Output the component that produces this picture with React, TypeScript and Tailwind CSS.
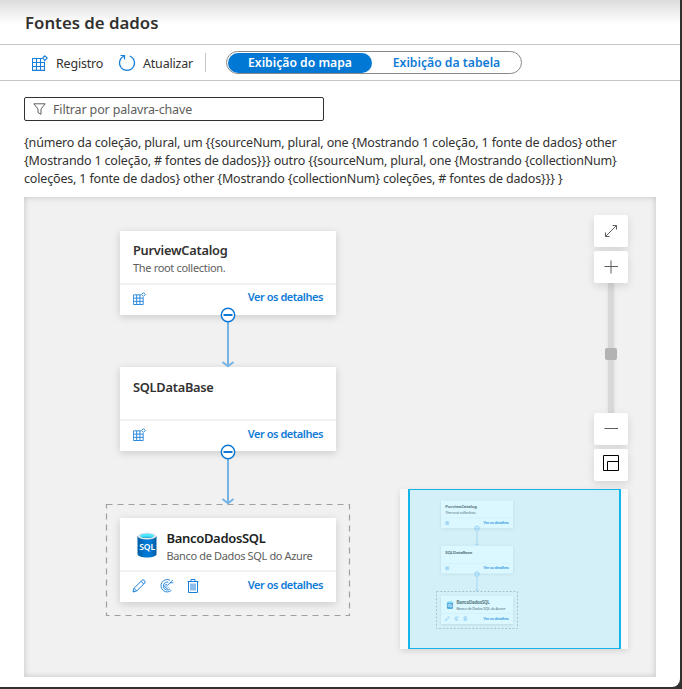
import React from "react";

function GridIcon({ size, className = "" }: { size: number; className?: string }) {
  return (
    <svg width={size} height={size} viewBox="0 0 16 16" fill="none" stroke="#1a7fd9" strokeWidth="1.1" className={`shrink-0 ${className}`}>
      <path d="M10 3.5H.5V15.4H12.5V6.5M.5 7.5H12.5M.5 11.5H12.5M4.5 3.5V15.5M8.5 3.5V15.5" />
      <path d="M12.9 .8L15.2 3.1L12.9 5.4L10.6 3.1Z" />
    </svg>
  );
}

function SqlIcon() {
  return (
    <svg width="20" height="26" viewBox="0 0 20 26">
      <defs>
        <linearGradient id="cyl" x1="0" x2="1">
          <stop offset="0" stopColor="#005ba1" />
          <stop offset=".4" stopColor="#0078d4" />
          <stop offset=".7" stopColor="#0078d4" />
          <stop offset="1" stopColor="#005ba1" />
        </linearGradient>
      </defs>
      <path d="M.5 4V22C.5 24 4.7 25.5 10 25.5S19.500 24 19.500 22V4Z" fill="url(#cyl)" />
      <ellipse cx="10" cy="4" rx="9.500" ry="3.500" fill="#e8e8e8" />
      <ellipse cx="10" cy="3.800" rx="7.300" ry="2.300" fill="#50e6ff" />
      <path d="M4 5.200C6 4.100 14 4.100 16 5.200C14 6.400 6 6.400 4 5.200Z" fill="#198ab3" opacity=".5" />
      <text x="10.200" y="17.600" textAnchor="middle" fill="#fff" fontSize="8.500" fontWeight="600" fontFamily="Noto Sans, sans-serif">SQL</text>
    </svg>
  );
}

function DetailLink() {
  return <span className="text-[11px] font-semibold leading-4 tracking-[-0.45px] text-[#0f7ad6]">Ver os detalhes</span>;
}

function CollectionCard({ title, subtitle }: { title: string; subtitle?: string }) {
  return (
    <div className="flex h-[84px] w-[216px] shrink-0 flex-col bg-white shadow-[0_2px_8px_rgba(0,0,0,0.16)]">
      <div className="h-[52px] pl-[13px] pt-[10.5px]">
        <div className="text-[12.8px] font-semibold leading-[18px] tracking-[-0.25px] text-[#323130]">{title}</div>
        <div className="text-[11px] leading-[17px] tracking-[-0.32px] text-[#605e5c]">{subtitle}</div>
      </div>
      <div className="flex h-8 items-start justify-between border-t-2 border-[#f1f1f1] pl-[13px] pr-[13px] pt-[4.5px]">
        <GridIcon size={13} className="mt-[2.5px]" />
        <DetailLink />
      </div>
    </div>
  );
}

function Connector({ height }: { height: string }) {
  return (
    <div className={`relative w-4 shrink-0 ${height}`}>
      <svg className="absolute -top-[7.5px] left-0 overflow-visible" width="16" height="61" viewBox="0 0 16 61" fill="none">
        <path d="M8 15V59" stroke="#75b3e5" strokeWidth="2" />
        <path d="M2.500 55L8 59.200L13.500 55" stroke="#75b3e5" strokeWidth="2" />
        <circle cx="8" cy="8" r="6.700" fill="#fff" stroke="#0f7ad6" strokeWidth="1.500" />
        <path d="M3.500 8H12.500" stroke="#0f7ad6" strokeWidth="2" />
      </svg>
    </div>
  );
}

function SourceCard() {
  return (
    <div className="flex h-[84px] w-[216px] flex-col bg-white shadow-[0_2px_8px_rgba(0,0,0,0.16)]">
      <div className="flex h-[52px] gap-[10px] pl-[16.5px] pt-[11px]">
        <div className="pt-[3px]"><SqlIcon /></div>
        <div className="whitespace-nowrap">
          <div className="text-[13px] font-semibold leading-[18px] tracking-[-0.32px] text-[#201f1e]">BancoDadosSQL</div>
          <div className="text-[11px] leading-[17px] tracking-[-0.36px] text-[#605e5c]">Banco de Dados SQL do Azure</div>
        </div>
      </div>
      <div className="flex h-8 items-start justify-between border-t-2 border-[#f1f1f1] pl-3 pr-[13px] pt-[5px]">
        <div className="flex gap-[13.5px] pt-[2px]">
          <svg width="14" height="14" viewBox="0 0 14 14" fill="none" stroke="#1a7fd9">
            <path d="M1 13L2 9.300L10 1.300Q11 .4 12.200 1.300L12.700 1.800Q13.600 3 12.700 4L4.700 12Z M2 9.300L4.700 12M9 2.300L11.700 5" />
          </svg>
          <svg width="14" height="14" viewBox="0 0 14 14" fill="none" stroke="#1a7fd9" strokeWidth=".9">
            <path d="M10 1.200A6.200 6.200 0 1 0 11.500 11.200M8.300 3.200A4 4 0 1 0 10 10M7 5.300A2 2 0 1 0 8.500 8.300M6.300 7.500L13 .9M10 3.800H12.700L13.300 3" />
          </svg>
          <svg width="12" height="14" viewBox="0 0 12 14" fill="none" stroke="#1a7fd9">
            <path d="M.5 2.500H11.500M4 2.500V.5H8V2.500M1.500 2.500V13.500H10.500V2.500M4 4.500V11.500M6 4.500V11.500M8 4.500V11.500" />
          </svg>
        </div>
        <DetailLink />
      </div>
    </div>
  );
}

function Graph({ outline = 1.2 }: { outline?: number }) {
  return (
    <div className="flex w-[408px] flex-col items-center pt-[33.5px]">
      <CollectionCard title="PurviewCatalog" subtitle="The root collection." />
      <Connector height="h-[52.5px]" />
      <CollectionCard title="SQLDataBase" />
      <Connector height="h-[53px]" />
      <div className="relative flex h-[112px] w-[244px] shrink-0 justify-center pt-[14px]">
        <svg className="absolute inset-0 overflow-visible" width="244" height="112" fill="none">
          <rect x=".5" y=".5" width="243" height="111" stroke="#a0a0a0" strokeWidth={outline} strokeDasharray="6 5" />
        </svg>
        <SourceCard />
      </div>
    </div>
  );
}

function MapButton({ children }: { children: React.ReactNode }) {
  return (
    <button className="relative flex h-8 w-[34px] items-center justify-center rounded-[2px] bg-white shadow-[0_3px_8px_rgba(0,0,0,0.12)]">
      {children}
    </button>
  );
}

export default function App() {
  return (
    <div className="h-[689px] w-[682px] overflow-hidden bg-[#323130] pb-[2px] pr-[2px] font-['Noto_Sans',sans-serif] text-[#323130]">
      <div className="flex h-full flex-col rounded-br-[8px] bg-white">
        <header className="flex h-[45px] shrink-0 items-center border-b border-[#c8c6c4] bg-[linear-gradient(#dcdcdc,#fff_24px)] pl-[25px] pt-[2px]">
          <h1 className="text-[16.8px] font-semibold">Fontes de dados</h1>
        </header>
        <div className="flex h-9 shrink-0 items-center whitespace-nowrap border-b border-[#c8c6c4] pl-8">
          <GridIcon size={16} className="mt-px" />
          <span className="ml-2 w-[47px] pt-[3px] text-[12.5px] tracking-[-0.2px]">Registro</span>
          <svg className="ml-[15px] shrink-0" width="18" height="18" viewBox="0 0 18 18" fill="none" stroke="#1a7fd9" strokeWidth="1.200">
            <path d="M6.200 2A7.500 7.500 0 1 0 11.800 2M6.500 5.500V1.500H2.500" />
          </svg>
          <span className="ml-[7px] w-[50px] pt-[3px] text-[12.5px] tracking-[-0.2px]">Atualizar</span>
          <span className="ml-3 h-[19px] w-px bg-[#c8c6c4]" />
          <div className="ml-5 flex h-[23px] w-[296px] items-center rounded-full border border-[#8a8886] pl-px text-[12.2px] font-semibold leading-4">
            <span className="flex h-[20px] w-[144px] items-center justify-center rounded-full bg-[#0078d4] text-white">Exibição do mapa</span>
            <span className="w-[149px] text-center text-[#0f7ad6]">Exibição da tabela</span>
          </div>
        </div>
        <main className="flex flex-col pl-6 pt-4">
          <div className="flex h-6 w-[300px] items-center rounded-[2px] border border-[#323130] pl-2 text-[#605e5c]">
            <svg width="13" height="12" viewBox="0 0 13 12" fill="none" stroke="#605e5c">
              <path d="M.8 .8H12.200L8 6V11.300L5 9.500V6Z" />
            </svg>
            <span className="ml-[7px] pt-[2px] text-[12.500px] tracking-[-0.15px]">Filtrar por palavra-chave</span>
          </div>
          <p className="mt-[13px] whitespace-nowrap text-[12.5px] leading-[18px] tracking-[-0.167px]">
            {"{número da coleção, plural, um {{sourceNum, plural, one {Mostrando 1 coleção, 1 fonte de dados} other"}<br />
            {"{Mostrando 1 coleção, # fontes de dados}}} outro {{sourceNum, plural, one {Mostrando {collectionNum}"}<br />
            {"coleções, 1 fonte de dados} other {Mostrando {collectionNum} coleções, # fontes de dados}}} }"}
          </p>
          <section className="relative mt-[9px] flex h-[480px] w-[632px] justify-between bg-[#f1f1f1] shadow-[inset_0_0_6px_rgba(0,0,0,0.2)]">
            <Graph />
            <div className="absolute right-7 top-[18px] flex flex-col items-end">
              <MapButton>
                <svg width="12" height="12" viewBox="0 0 12 12" fill="none" stroke="#605e5c">
                  <path d="M.5 11.500L11.500 .5M7.500 .5H11.500V4.500M.5 7.500V11.500H4.500" />
                </svg>
              </MapButton>
              <div className="h-1" />
              <MapButton>
                <svg width="14" height="14" viewBox="0 0 14 14" stroke="#605e5c"><path d="M7 .5V13.500M.5 6.500H14" /></svg>
              </MapButton>
              <div className="mr-[14px] flex h-[130px] w-[6px] items-center justify-center bg-[#d8d8d8] shadow-[0_0_4px_rgba(0,0,0,0.08)]">
                <div className="mt-[12px] h-3 w-3 shrink-0 rounded-[2px] bg-[#b3b3b3]" />
              </div>
              <MapButton>
                <svg width="14" height="14" viewBox="0 0 14 14" stroke="#605e5c"><path d="M.5 6.500H14" /></svg>
              </MapButton>
              <div className="h-1" />
              <MapButton>
                <svg className="mb-[4px]" width="16" height="16" viewBox="0 0 16 16" fill="none" stroke="#000"><path d="M.5 .5H15.500V15.500H.5ZM4.500 15.500V6.500H15.500" /></svg>
              </MapButton>
              <div className="relative mt-2 flex h-[160px] w-[228px] justify-center bg-[#f9f9f9] shadow-[0_2px_6px_rgba(0,0,0,0.12)]">
                <div className="relative h-[160px] w-[213px] overflow-hidden bg-[#f0f0f0]">
                  <div className="absolute left-[1.5px] top-0 h-[480px] w-[632px] origin-top-left scale-[0.3333] [-webkit-text-stroke:0.5px]">
                    <Graph outline={3} />
                  </div>
                  <div className="absolute inset-0 border-x-2 border-y border-[#15b5ea] bg-[#b0eeff]/45" />
                </div>
              </div>
            </div>
          </section>
        </main>
      </div>
    </div>
  );
}
